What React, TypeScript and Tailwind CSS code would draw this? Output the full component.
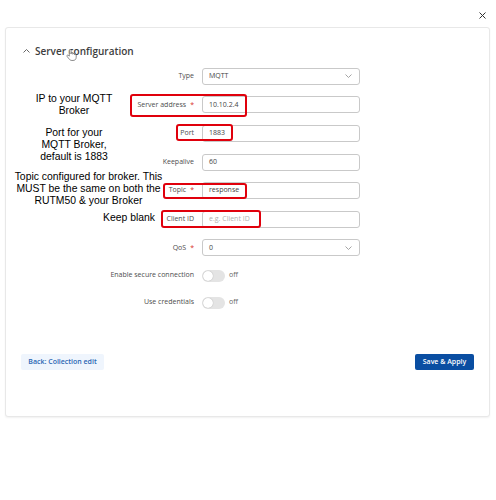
import React from 'react';

type Row = {
  label: string;
  required?: boolean;
  value?: string;
  placeholder?: string;
  select?: boolean;
};

const rows: Row[] = [
  { label: 'Type', value: 'MQTT', select: true },
  { label: 'Server address', required: true, value: '10.10.2.4' },
  { label: 'Port', value: '1883' },
  { label: 'Keepalive', value: '60' },
  { label: 'Topic', required: true, value: 'response' },
  { label: 'Client ID', placeholder: 'e.g. Client ID' },
  { label: 'QoS', required: true, value: '0', select: true },
];

const toggles = ['Enable secure connection', 'Use credentials'];

function Chevron({ up }: { up?: boolean }) {
  return (
    <svg width="7" height="4" viewBox="0 0 7 4" fill="none">
      <path
        d={up ? 'M0.5 3.5 L3.5 0.5 L6.5 3.5' : 'M0.5 0.5 L3.5 3.5 L6.5 0.5'}
        stroke="currentColor"
        strokeWidth="0.9"
      />
    </svg>
  );
}

function FieldRow({ row }: { row: Row }) {
  return (
    <div className="flex items-center h-[28.6px]">
      <div className="w-[188px] text-right text-[7px] text-[#4d4d4d]">
        {row.label}
        {row.required && <span className="text-[#d9302c] ml-[4px]">*</span>}
      </div>
      <div className="ml-[8px] w-[158px] h-[17px] border border-[#c9c9c9] rounded-[3px] bg-white flex items-center justify-between pl-[6px] pr-[7px] text-[7px]">
        {row.value ? (
          <span className="text-[#444]">{row.value}</span>
        ) : (
          <span className="text-[#b0b0b0]">{row.placeholder}</span>
        )}
        {row.select && (
          <span className="text-[#9a9a9a]">
            <Chevron />
          </span>
        )}
      </div>
    </div>
  );
}

function ToggleRow({ label }: { label: string }) {
  return (
    <div className="flex items-center h-[27px]">
      <div className="w-[188px] text-right text-[7px] text-[#4d4d4d]">{label}</div>
      <div className="ml-[8px] w-[23px] h-[12px] rounded-full bg-[#e4e4e4] flex items-center pl-[1px]">
        <div className="w-[10px] h-[10px] rounded-full bg-white shadow-[0_0_1px_rgba(0,0,0,0.35)]" />
      </div>
      <span className="ml-[4px] text-[7px] text-[#666]">off</span>
    </div>
  );
}

function HandCursor() {
  return (
    <svg width="11" height="12" viewBox="0 0 10 11" fill="white" stroke="#666" strokeWidth="0.7">
      <path d="M3 5 V1.3 a0.8 0.8 0 0 1 1.6 0 V4.6 V3.8 a0.8 0.8 0 0 1 1.6 0 V4.8 a0.8 0.8 0 0 1 1.6 0 V5.4 a0.8 0.8 0 0 1 1.5 0 V7.6 C9.3 9.3 8.2 10.5 6.4 10.5 H5.4 C4.2 10.5 3.4 9.9 2.6 8.9 L0.9 6.7 a0.8 0.8 0 0 1 1.2 -1 L3 6.6 Z" />
    </svg>
  );
}

const annot = "absolute text-center text-black text-[10.4px] leading-[12px] font-['Liberation_Sans',Arial,sans-serif]";
const redBox = 'absolute border-2 border-[#e0000c] rounded-[3px]';

export default function App() {
  return (
    <div className="relative w-[496px] h-[500px] bg-white font-['Open_Sans',sans-serif] overflow-hidden">
      {/* close button */}
      <div className="h-[27px] flex justify-end pt-[12px] pr-[10px] text-[#333]">
        <svg width="7" height="7" viewBox="0 0 7 7" stroke="currentColor" strokeWidth="1">
          <path d="M0.5 0.5 L6.5 6.5 M6.5 0.5 L0.5 6.5" />
        </svg>
      </div>

      <div className="ml-[5px] w-[485px] h-[390px] border border-[#e8e8e8] rounded-[3px] shadow-[0_1px_2px_rgba(0,0,0,0.06)] bg-white flex flex-col">
        {/* section header */}
        <div className="mt-[13px] h-[20px] flex items-center pl-[17px] gap-[5px]">
          <span className="text-[#555]">
            <Chevron up />
          </span>
          <span className="text-[10px] font-semibold text-[#3d3d3d]">Server configuration</span>
        </div>

        <div className="mt-[1px] flex flex-col">
          {rows.map((r) => (
            <FieldRow key={r.label} row={r} />
          ))}
          {toggles.map((t) => (
            <ToggleRow key={t} label={t} />
          ))}
        </div>

        <div className="mt-[38px] flex justify-between px-[15px]">
          <button className="w-[83px] h-[16px] rounded-[2px] bg-[#eff5fd] text-[7px] font-semibold text-[#2a66b3]">
            Back: Collection edit
          </button>
          <button className="w-[59px] h-[16px] rounded-[2px] bg-[#0a4ea2] text-[7px] font-semibold text-white">
            Save &amp; Apply
          </button>
        </div>
      </div>

      {/* hover cursor */}
      <div className="absolute left-[66px] top-[49px]">
        <HandCursor />
      </div>

      {/* annotation overlays */}
      <div className={`${redBox} left-[130px] top-[94px] w-[117px] h-[23px]`} />
      <div className={`${redBox} left-[176px] top-[124px] w-[57px] h-[17px]`} />
      <div className={`${redBox} left-[163px] top-[183px] w-[84px] h-[16px]`} />
      <div className={`${redBox} left-[161px] top-[210px] w-[100px] h-[18px]`} />

      <div className={`${annot} left-[14px] top-[93px] w-[120px]`}>
        IP to your MQTT
        <br />
        Broker
      </div>
      <div className={`${annot} left-[14px] top-[127px] w-[120px]`}>
        Port for your
        <br />
        MQTT Broker,
        <br />
        default is 1883
      </div>
      <div className={`${annot} left-[8px] top-[171px] w-[161px]`}>
        Topic configured for broker. This
        <br />
        MUST be the same on both the
        <br />
        RUTM50 &amp; your Broker
      </div>
      <div className={`${annot} left-[96px] top-[212px] w-[66px]`}>Keep blank</div>
    </div>
  );
}
